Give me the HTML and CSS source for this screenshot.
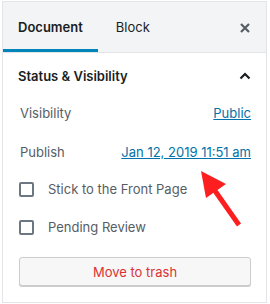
FILE: index.html
```html
<!DOCTYPE html>
<html>
<head>
<meta charset="utf-8">
<link rel="stylesheet" href="styles.css">
</head>
<body>
<div class="panel">
  <div class="header">
    <div class="tab active">Document</div>
    <div class="tab">Block</div>
    <div class="spacer"></div>
    <div class="close">
      <svg width="10" height="10" viewBox="0 0 10 10"><path d="M1 1L9 9M9 1L1 9" stroke="#555d66" stroke-width="2.2" fill="none"/></svg>
    </div>
  </div>
  <div class="section">
    <div class="title-row">
      <span class="title">Status &amp; Visibility</span>
      <svg class="chev" width="12" height="8" viewBox="0 0 12 8"><path d="M1.5 6.5L6 2L10.5 6.5" stroke="#191e23" stroke-width="2.2" fill="none"/></svg>
    </div>
    <div class="row r1"><span class="label">Visibility</span><a class="link">Public</a></div>
    <div class="row r2"><span class="label">Publish</span><a class="link">Jan 12, 2019 11:51 am</a></div>
    <div class="check r3"><span class="box"></span><span class="clabel">Stick to the Front Page</span></div>
    <div class="check r4"><span class="box"></span><span class="clabel">Pending Review</span></div>
    <div class="button">Move to trash</div>
  </div>
</div>
<svg class="arrow" width="270" height="304" viewBox="0 0 270 304">
  <line x1="213" y1="188" x2="239" y2="225" stroke="#fd1f1f" stroke-width="5"/>
  <polygon points="201,171 226,184 206,198" fill="#fd1f1f"/>
</svg>
</body>
</html>
```
FILE: styles.css
```css
html, body { margin: 0; padding: 0; background: #fff; }
body {
  font-family: Inter, "Noto Sans", sans-serif;
  font-size: 13px;
  color: #191e23;
  width: 270px;
  height: 304px;
  overflow: hidden;
  position: relative;
}
.panel {
  margin: 1px 0 0 2px;
  width: 263px;
  height: 300px;
  border: 1px solid #e2e4e7;
}
.header {
  display: flex;
  align-items: stretch;
  height: 50px;
  background: #f3f4f5;
  border-bottom: 1px solid #e2e4e7;
}
.tab {
  display: flex;
  align-items: center;
  padding: 0 15px;
  font-size: 13px;
  color: #191e23;
}
.tab + .tab { margin-left: 3px; }
.tab.active {
  font-weight: 600;
  box-shadow: inset 0 -3px 0 #0085ba;
}
.spacer { flex: 1; }
.close {
  display: flex;
  align-items: center;
  padding: 0 16px 0 0;
}
.close svg { display: block; margin-top: 2px; }
.section {
  display: flex;
  flex-direction: column;
  padding: 0 15px 0 16px;
}
.title-row {
  height: 46px;
  display: flex;
  align-items: center;
  justify-content: space-between;
}
.title { font-weight: 600; margin-left: -1px; }
.chev { display: block; }
.row {
  height: 28px;
  display: flex;
  align-items: center;
  justify-content: space-between;
}
.r2 { margin-top: 11px; }
.label { color: #555d66; margin-left: 1px; }
.link { color: #0073aa; text-decoration: underline; }
.check {
  height: 28px;
  display: flex;
  align-items: center;
}
.r3 { margin-top: 9px; }
.r4 { margin-top: 10px; }
.box {
  width: 11px;
  height: 11px;
  border: 2px solid #6c7781;
  border-radius: 2px;
}
.clabel { color: #555d66; margin-left: 14px; }
.button {
  margin-top: 16px;
  height: 27px;
  border: 1px solid #ccc;
  border-radius: 3px;
  background: #f7f7f7;
  box-shadow: 0 1px 0 #ccc;
  color: #dc3232;
  display: flex;
  align-items: center;
  justify-content: center;
}
.arrow { position: absolute; left: 0; top: 0; pointer-events: none; }
```
